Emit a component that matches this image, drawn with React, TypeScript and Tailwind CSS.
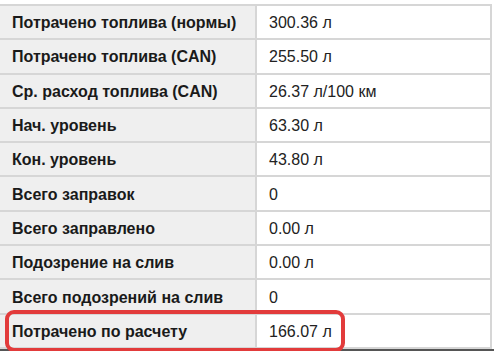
import React from "react";

const rows: [string, string][] = [
  ["Потрачено топлива (нормы)", "300.36 л"],
  ["Потрачено топлива (CAN)", "255.50 л"],
  ["Ср. расход топлива (CAN)", "26.37 л/100 км"],
  ["Нач. уровень", "63.30 л"],
  ["Кон. уровень", "43.80 л"],
  ["Всего заправок", "0"],
  ["Всего заправлено", "0.00 л"],
  ["Подозрение на слив", "0.00 л"],
  ["Всего подозрений на слив", "0"],
  ["Потрачено по расчету", "166.07 л"],
];

export default function App() {
  return (
    <div className="relative w-[494px] h-[351px] overflow-hidden bg-white" style={{ fontFamily: '"Liberation Sans", Arial, sans-serif' }}>
      <div className="pt-[4px] w-[492px]">
        <div className="border-t-2 border-r-2 border-[#d6d6d6]">
          {rows.map(([k, v], i) => (
            <div key={i} className="flex h-[34.3px] border-b-2 border-[#d6d6d6]">
              <div className="w-[257px] bg-[#efefef] border-r-2 border-[#d6d6d6] flex items-center pl-[12px] pt-[2px] text-[16px] font-bold text-[#1a1a1a]">
                {k}
              </div>
              <div className="flex-1 flex items-center pl-[12px] pt-[2px] text-[16px] text-[#222]">
                {v}
              </div>
            </div>
          ))}
        </div>
      </div>
      <div className="absolute left-0 right-0 top-[349px] h-[2px] bg-[#555]" />
      <div className="absolute left-[5px] top-[310px] w-[340px] h-[42px] border-[4px] border-[#e23b3b] rounded-[9px]" />
    </div>
  );
}
